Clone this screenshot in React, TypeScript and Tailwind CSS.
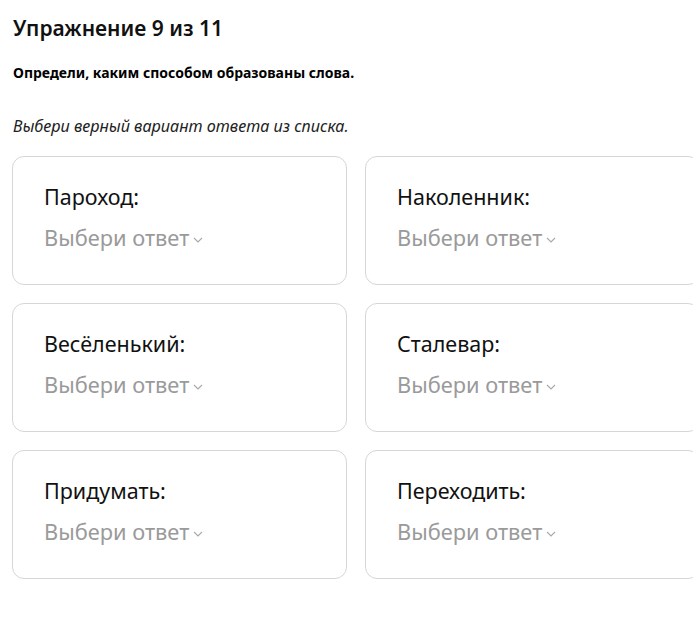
import React from "react";

const items = [
  "Пароход:",
  "Наколенник:",
  "Весёленький:",
  "Сталевар:",
  "Придумать:",
  "Переходить:",
];

function Card({ label }: { label: string }) {
  return (
    <div className="h-[129px] w-[335px] shrink-0 rounded-[12px] border border-[#d6d6d6] bg-white pl-[31px] pt-[26px]">
      <div className="text-[21.5px] leading-[28px] text-[#111]">{label}</div>
      <div className="mt-[13px] flex items-center text-[21.8px] leading-[28px] text-[#9a9a9a]">
        <span>Выбери ответ</span>
        <svg width="10" height="8" viewBox="0 0 10 8" className="ml-[4px] mt-[3px]">
          <path d="M1 2 L5 6 L9 2" fill="none" stroke="#a8a8a8" strokeWidth="1.1" />
        </svg>
      </div>
    </div>
  );
}

export default function App() {
  return (
    <div
      className="w-[693px] h-[618px] overflow-hidden bg-white"
      style={{ fontFamily: '"Noto Sans", "Open Sans", sans-serif' }}
    >
      <div className="pl-[13px] pt-[14px]">
        <h1 className="text-[21px] leading-[28px] font-semibold text-[#111]">Упражнение 9 из 11</h1>
        <p className="mt-[22px] text-[14px] leading-[18px] font-bold text-black">
          Определи, каким способом образованы слова.
        </p>
        <p className="mt-[33px] text-[16.2px] leading-[22px] italic text-[#222]">
          Выбери верный вариант ответа из списка.
        </p>
      </div>
      <div className="ml-[12px] mt-[19px] grid w-[700px] grid-cols-[335px_335px] gap-x-[18px] gap-y-[18px]">
        {items.map((l) => (
          <Card key={l} label={l} />
        ))}
      </div>
    </div>
  );
}
